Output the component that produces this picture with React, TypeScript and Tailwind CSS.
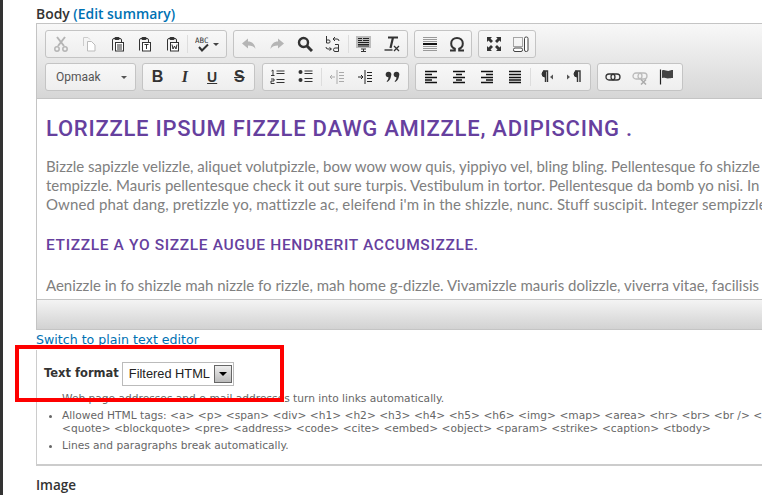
import React from "react";

const S = ({ children, w = 16, h = 16 }: { children: React.ReactNode; w?: number; h?: number }) => (
  <svg width={w} height={h} viewBox={`0 0 ${w} ${h}`} fill="none" className="block">{children}</svg>
);
const K = "#333";
const G = "#b5b5b5";

const Clip = ({ letter }: { letter?: string }) => (
  <S>
    <path d="M3.5 14.5 V4 Q3.5 2.5 5 2.5 H11 Q12.5 2.5 12.5 4 V6" stroke={K} />
    <rect x="5.5" y="1" width="5" height="3" rx="1" fill={K} />
    <rect x="6.5" y="6.5" width="8" height="8.5" fill="#fff" stroke={K} />
    {letter ? (
      <path d={letter === "T" ? "M8.5 8.5 H12.5 M10.5 8.5 V13" : "M8 8.5 L9 13 L10.5 10 L12 13 L13 8.5"} stroke={K} />
    ) : (
      <path d="M8 9 H13 M8 11 H13 M8 13 H13" stroke={K} />
    )}
  </S>
);

const icons: Record<string, React.ReactNode> = {
  cut: (
    <S>
      <path d="M4 1 L11 10 M12 1 L5 10" stroke={G} strokeWidth="2" />
      <circle cx="4" cy="13" r="2.2" stroke={G} strokeWidth="1.5" />
      <circle cx="12" cy="13" r="2.2" stroke={G} strokeWidth="1.5" />
    </S>
  ),
  copy: (
    <S>
      <path d="M2.5 10 V1.5 H7 L9 3.5" stroke="#ccc" />
      <path d="M6.5 5.5 H10.5 L14 9 V15 H6.5 Z" stroke="#bbb" fill="#fff" />
    </S>
  ),
  paste: <Clip />,
  pasteT: <Clip letter="T" />,
  pasteW: <Clip letter="W" />,
  undo: (
    <S>
      <path d="M1 7.5 L7 2.5 V5.5 C11 5.5 14 8 14.5 13 C13 10 10.5 9.5 7 9.5 V12.5 Z" fill={G} />
    </S>
  ),
  redo: (
    <S>
      <path d="M15 7.5 L9 2.5 V5.5 C5 5.5 2 8 1.5 13 C3 10 5.5 9.5 9 9.5 V12.5 Z" fill={G} />
    </S>
  ),
  find: (
    <S>
      <circle cx="6.5" cy="6.5" r="4.5" stroke={K} strokeWidth="2.4" />
      <path d="M10 10 L15 15" stroke={K} strokeWidth="3" />
    </S>
  ),
  replace: (
    <S>
      <path d="M1.5 0 V7 M1.5 4 H4 Q5 4 5 5.5 Q5 7 4 7 H1.5" stroke={K} />
      <path d="M8 3 H12 Q14 3 14 5 M10 1 L8 3 L10 5" stroke={K} />
      <path d="M1 11 Q1 13 3 13 H6 M4.5 11.5 L6.5 13 L4.5 14.5" stroke={K} />
      <path d="M10 8.5 H13.5 V15.5 H10 Q8.5 15.5 8.5 13.7 Q8.5 12 10 12 H13.5" stroke={K} />
    </S>
  ),
  selectAll: (
    <S>
      <rect x="0" y="0" width="15" height="12" fill="#bcbcbc" />
      <path d="M2 2.5 H6 M2 4.5 H6 M2 6.5 H13 M2 8.5 H13 M2 10 H13 M7 2.5 H13 M7 4.5 H13" stroke="#222" />
      <path d="M5 13 H10 M7.5 13 V16 M5 15.5 H10" stroke={K} />
    </S>
  ),
  removeFormat: (
    <S>
      <path d="M4 1.5 H14 M9 1.5 L6.5 12" stroke={K} strokeWidth="2.2" />
      <path d="M0.5 14 H8.5" stroke={K} strokeWidth="1.4" />
      <path d="M10 10 L15 15 M15 10 L10 15" stroke={K} strokeWidth="1.3" />
    </S>
  ),
  hr: (
    <S>
      <path d="M1 1.5 H15 M1 3.5 H15 M1 5.5 H15 M1 10.5 H15 M1 12.5 H15 M1 14.5 H15" stroke="#999" />
      <path d="M1 8 H15" stroke="#111" strokeWidth="2" />
    </S>
  ),
  omega: (
    <S>
      <path d="M1 14.5 H5.8 V12.8 C3.2 11.8 2.2 9.8 2.2 7.6 C2.2 4.2 4.6 2 8 2 C11.4 2 13.8 4.2 13.8 7.6 C13.8 9.8 12.8 11.8 10.2 12.8 V14.5 H15" stroke={K} strokeWidth="2" />
    </S>
  ),
  maximize: (
    <S>
      <path d="M1 1 H6 L4.5 2.5 L7 5 L5 7 L2.5 4.5 L1 6 Z M15 1 V6 L13.5 4.5 L11 7 L9 5 L11.5 2.5 L10 1 Z M1 15 V10 L2.5 11.5 L5 9 L7 11 L4.5 13.5 L6 15 Z M15 15 H10 L11.5 13.5 L9 11 L11 9 L13.5 11.5 L15 10 Z" fill={K} />
    </S>
  ),
  blocks: (
    <S>
      <rect x="0.5" y="1.5" width="9" height="9" stroke="#555" strokeDasharray="1 1" />
      <rect x="0.5" y="12" width="9" height="3.5" rx="1.5" fill="#fff" stroke="#444" />
      <rect x="11.5" y="1" width="3.5" height="14.5" rx="1.5" fill="#fff" stroke="#444" />
    </S>
  ),
  ol: (
    <S>
      <path d="M1.5 2 L3 1 V6 M1 6.5 H4.5" stroke={K} />
      <path d="M1 10 H4 V12 H1 V14.5 H4.5" stroke={K} />
      <path d="M6.5 2 H14.5 M6.5 4.5 H14.5 M6.5 10.5 H14.5 M6.5 13.5 H14.5" stroke={K} strokeWidth="1.2" />
    </S>
  ),
  ul: (
    <S>
      <circle cx="2.5" cy="3" r="2" fill={K} />
      <circle cx="2.5" cy="11" r="2" fill={K} />
      <path d="M6.5 2 H14.5 M6.5 4.5 H14.5 M6.5 9.5 H14.5 M6.5 12.5 H14.5" stroke={K} strokeWidth="1.2" />
    </S>
  ),
  outdent: (
    <S>
      <path d="M8 1 V15" stroke="#aaa" />
      <path d="M10 3.5 H15 M10 6.5 H15 M10 9.5 H15 M10 12.5 H15 M1 8 H6 M1 8 L3 6 M1 8 L3 10" stroke="#aaa" />
    </S>
  ),
  indent: (
    <S>
      <path d="M8 1 V15" stroke="#222" />
      <path d="M10 3.5 H15 M10 6.5 H15 M10 9.5 H15 M10 12.5 H15 M1 8 H6 M6 8 L4 6 M6 8 L4 10" stroke="#222" />
    </S>
  ),
  quote: (
    <S>
      <circle cx="3.5" cy="5.5" r="2.8" fill={K} />
      <path d="M5.9 5.5 C6.3 9 4.8 11.5 2.2 13 L1.6 12.2 C3.2 10.8 3.6 9.5 3.4 7.5 Z" fill={K} />
      <circle cx="11.5" cy="5.5" r="2.8" fill={K} />
      <path d="M13.9 5.5 C14.3 9 12.8 11.5 10.2 13 L9.6 12.2 C11.2 10.8 11.6 9.5 11.4 7.5 Z" fill={K} />
    </S>
  ),
  left: (
    <S>
      <path d="M2 2.5 H14 M2 5.5 H9 M2 8.5 H14 M2 11 H9 M2 13.5 H14" stroke="#111" strokeWidth="1.6" />
    </S>
  ),
  center: (
    <S>
      <path d="M2 2.5 H14 M5 5.5 H11 M2 8.5 H14 M5 11 H11 M2 13.5 H14" stroke="#111" strokeWidth="1.6" />
    </S>
  ),
  right: (
    <S>
      <path d="M2 2.5 H14 M7 5.5 H14 M2 8.5 H14 M7 11 H14 M2 13.5 H14" stroke="#111" strokeWidth="1.6" />
    </S>
  ),
  justify: (
    <S>
      <path d="M2 2.5 H14 M2 5.5 H14 M2 8.5 H14 M2 11 H14 M2 13.5 H14" stroke="#111" strokeWidth="1.6" />
    </S>
  ),
  ltr: (
    <S>
      <path d="M5 2 H9.5 V13 M7.5 2 V13" stroke={K} strokeWidth="1.4" />
      <path d="M7 2 A3 3 0 0 0 7 8 Z" fill={K} stroke={K} />
      <path d="M15 5.5 L12 8 L15 10.5 Z" fill="#555" />
    </S>
  ),
  rtl: (
    <S>
      <path d="M9 2 H14 V13 M11.5 2 V13" stroke={K} strokeWidth="1.4" />
      <path d="M11 2 A3 3 0 0 0 11 8 Z" fill={K} stroke={K} />
      <path d="M1 5.5 L4 8 L1 10.5 Z" fill="#555" />
    </S>
  ),
  link: (
    <S>
      <rect x="1" y="5" width="9" height="6" rx="3" stroke={K} strokeWidth="1.3" />
      <rect x="6" y="5" width="9" height="6" rx="3" stroke={K} strokeWidth="1.3" />
    </S>
  ),
  unlink: (
    <S>
      <rect x="1" y="4" width="9" height="6" rx="3" stroke="#bbb" strokeWidth="1.3" />
      <rect x="6" y="4" width="9" height="6" rx="3" stroke="#bbb" strokeWidth="1.3" />
      <path d="M9 10.5 L14 15.5 M14 10.5 L9 15.5" stroke="#aaa" strokeWidth="1.5" />
    </S>
  ),
  anchor: (
    <S>
      <path d="M1.5 0.5 V15.5" stroke="#222" strokeWidth="1.2" />
      <path d="M3 1.5 C6 0 8 3 11 1.5 C12.5 1 13 1 14 1 V9 C11 9 9 10 6.5 9 C5 8.5 4 9 3 9 Z" fill="#444" />
    </S>
  ),
};

const Btn = ({ i }: { i: string }) => (
  <span className="flex h-[26px] w-[28px] items-center justify-center">{icons[i]}</span>
);
const Sep = () => <span className="mx-[1px] h-[18px] w-px bg-[#ddd]" />;
const Group = ({ children, className = "" }: { children: React.ReactNode; className?: string }) => (
  <div className={`flex h-[28px] items-center rounded-[3px] border border-[#c4c4c4] bg-gradient-to-b from-[#f8f8f8] to-[#eeeeee] px-[1px] ${className}`}>
    {children}
  </div>
);
const Fmt = ({ children, className }: { children: React.ReactNode; className: string }) => (
  <span className={`flex h-[26px] w-[28px] items-center justify-center text-[#333] ${className}`}>{children}</span>
);

const paragraphClass = "whitespace-nowrap text-[15px] leading-[19px] text-[#808080]";

const tags1 =
  "Allowed HTML tags: <a> <p> <span> <div> <h1> <h2> <h3> <h4> <h5> <h6> <img> <map> <area> <hr> <br> <br /> <ul> <ol> <li> <dl> <dt> <dd> <table> <tr> <td>";
const tags2 = "<quote> <blockquote> <pre> <address> <code> <cite> <embed> <object> <param> <strike> <caption> <tbody>";

export default function App() {
  return (
    <div className="relative h-[495px] w-[762px] overflow-hidden bg-white font-['DejaVu_Sans',sans-serif]">
      <div className="flex h-full w-[1100px] border-l-[3px] border-[#333]">
        <div className="ml-[33px] flex w-[1060px] flex-col pt-[5px]">
          <div className="h-[18px] font-['Open_Sans',sans-serif] text-[13.9px] font-semibold leading-[17px] text-[#333]">
            Body <span className="text-[#0071b3]">(Edit summary)</span>
          </div>
          <div className="border border-[#c4c4c4]">
            <div className="flex h-[75px] flex-col gap-[5px] border-b border-[#c4c4c4] bg-gradient-to-b from-[#f8f8f8] to-[#d6d6d6] pl-[8px] pt-[6px]">
              <div className="flex gap-[6px]">
                <Group className="w-[182px]">
                  <Btn i="cut" />
                  <Btn i="copy" />
                  <Btn i="paste" />
                  <Btn i="pasteT" />
                  <Btn i="pasteW" />
                  <Sep />
                  <span className="flex h-[26px] w-[36px] items-center justify-center gap-[2px]">
                    <S>
                      <text x="0" y="7" fontSize="7.5" fontFamily="'DejaVu Sans Mono', monospace" fill={K}>ABC</text>
                      <path d="M4 11 L7 14.5 L13 8.5" stroke={K} strokeWidth="2" />
                    </S>
                    <span className="h-0 w-0 border-x-[3px] border-t-[3px] border-x-transparent border-t-[#444]" />
                  </span>
                </Group>
                <Group className="w-[175px]">
                  <Btn i="undo" />
                  <Btn i="redo" />
                  <Btn i="find" />
                  <Btn i="replace" />
                  <Sep />
                  <Btn i="selectAll" />
                  <Btn i="removeFormat" />
                </Group>
                <Group className="w-[58px]">
                  <Btn i="hr" />
                  <Btn i="omega" />
                </Group>
                <Group className="w-[58px]">
                  <Btn i="maximize" />
                  <Btn i="blocks" />
                </Group>
              </div>
              <div className="flex gap-[6px]">
                <Group className="w-[91px] justify-between pl-[10px] pr-[8px]">
                  <span className="font-['Roboto',sans-serif] text-[12px] text-[#555]">Opmaak</span>
                  <span className="h-0 w-0 border-x-[3px] border-t-[3px] border-x-transparent border-t-[#555]" />
                </Group>
                <Group className="w-[113px]">
                  <Fmt className="font-['Liberation_Sans',sans-serif] text-[16px] font-bold">B</Fmt>
                  <Fmt className="font-['Liberation_Serif',serif] text-[16px] font-bold italic">I</Fmt>
                  <Fmt className="font-['Liberation_Sans',sans-serif] text-[14px] font-bold underline">U</Fmt>
                  <Fmt className="font-['Liberation_Sans',sans-serif] text-[16px] font-bold line-through">S</Fmt>
                </Group>
                <Group className="ml-[1px] w-[147px]">
                  <Btn i="ol" />
                  <Btn i="ul" />
                  <Sep />
                  <Btn i="outdent" />
                  <Btn i="indent" />
                  <Btn i="quote" />
                </Group>
                <Group className="w-[176px]">
                  <Btn i="left" />
                  <Btn i="center" />
                  <Btn i="right" />
                  <Btn i="justify" />
                  <Sep />
                  <Btn i="ltr" />
                  <Btn i="rtl" />
                </Group>
                <Group className="w-[86px]">
                  <Btn i="link" />
                  <Btn i="unlink" />
                  <Btn i="anchor" />
                </Group>
              </div>
            </div>
            <div className="h-[200px] overflow-hidden pl-[9px] pt-[16px] font-['Lato',sans-serif]">
              <h1 className="font-['Roboto',sans-serif] text-[22px] font-medium leading-[28px] tracking-[0.75px] text-[#66409e]">LORIZZLE IPSUM FIZZLE DAWG AMIZZLE, ADIPISCING .</h1>
              <div className="mt-[14px] flex flex-col">
                <p className={paragraphClass}>Bizzle sapizzle velizzle, aliquet volutpizzle, bow wow wow quis, yippiyo vel, bling bling. Pellentesque fo shizzle ac dolor</p>
                <p className={paragraphClass}>tempizzle. Mauris pellentesque check it out sure turpis. Vestibulum in tortor. Pellentesque da bomb yo nisi. In hac habitasse</p>
                <p className={`${paragraphClass} tracking-[0.1px]`}>Owned phat dang, pretizzle yo, mattizzle ac, eleifend i'm in the shizzle, nunc. Stuff suscipit. Integer sempizzle velit</p>
              </div>
              <h2 className="mt-[21px] font-['Roboto',sans-serif] text-[15.5px] font-medium leading-[20px] tracking-[0.65px] text-[#66409e]">ETIZZLE A YO SIZZLE AUGUE HENDRERIT ACCUMSIZZLE.</h2>
              <p className={`mt-[21px] ${paragraphClass}`}>Aenizzle in fo shizzle mah nizzle fo rizzle, mah home g-dizzle. Vivamizzle mauris dolizzle, viverra vitae, facilisis ac</p>
            </div>
            <div className="h-[30px] border-t border-[#c4c4c4] bg-gradient-to-b from-[#f4f4f4] to-[#d2d2d2]" />
          </div>
          <a className="mt-[1px] h-[19px] text-[12.6px] leading-[17px] text-[#0071b3]">Switch to plain text editor</a>
          <div className="h-[116px] border-b-2 border-l border-[#ccc] pl-[7px] pt-[11px]">
            <div className="flex h-[25px] items-center gap-[3px]">
              <span className="whitespace-nowrap text-[11.5px] font-bold text-[#333]">Text format</span>
              <div className="flex h-[24px] w-[112px] items-center justify-between border border-[#bbb] bg-white pl-[6px] pr-[1px]">
                <span className="whitespace-nowrap font-['Liberation_Sans',sans-serif] text-[12.8px] text-[#222]">Filtered HTML</span>
                <span className="flex h-[18px] w-[18px] shrink-0 items-center justify-center border border-[#666] bg-gradient-to-b from-[#eee] to-[#bbb]">
                  <span className="h-0 w-0 border-x-[4px] border-t-[4px] border-x-transparent border-t-black" />
                </span>
              </div>
            </div>
            <ul className="mt-[6px] list-disc pl-[18px] text-[10.65px] leading-[13.5px] text-[#666] marker:text-[#666]">
              <li className="mb-[3px] whitespace-nowrap">Web page addresses and e-mail addresses turn into links automatically.</li>
              <li className="mb-[3px] whitespace-nowrap">
                {tags1}
                <br />
                {tags2}
              </li>
              <li className="whitespace-nowrap">Lines and paragraphs break automatically.</li>
            </ul>
          </div>
          <div className="mt-[11px] font-['Open_Sans',sans-serif] text-[13.5px] font-semibold leading-[17px] text-[#333]">Image</div>
        </div>
      </div>
      <div className="pointer-events-none absolute left-[15px] top-[345px] h-[57px] w-[269px] border-4 border-[#fe0000]" />
    </div>
  );
}
